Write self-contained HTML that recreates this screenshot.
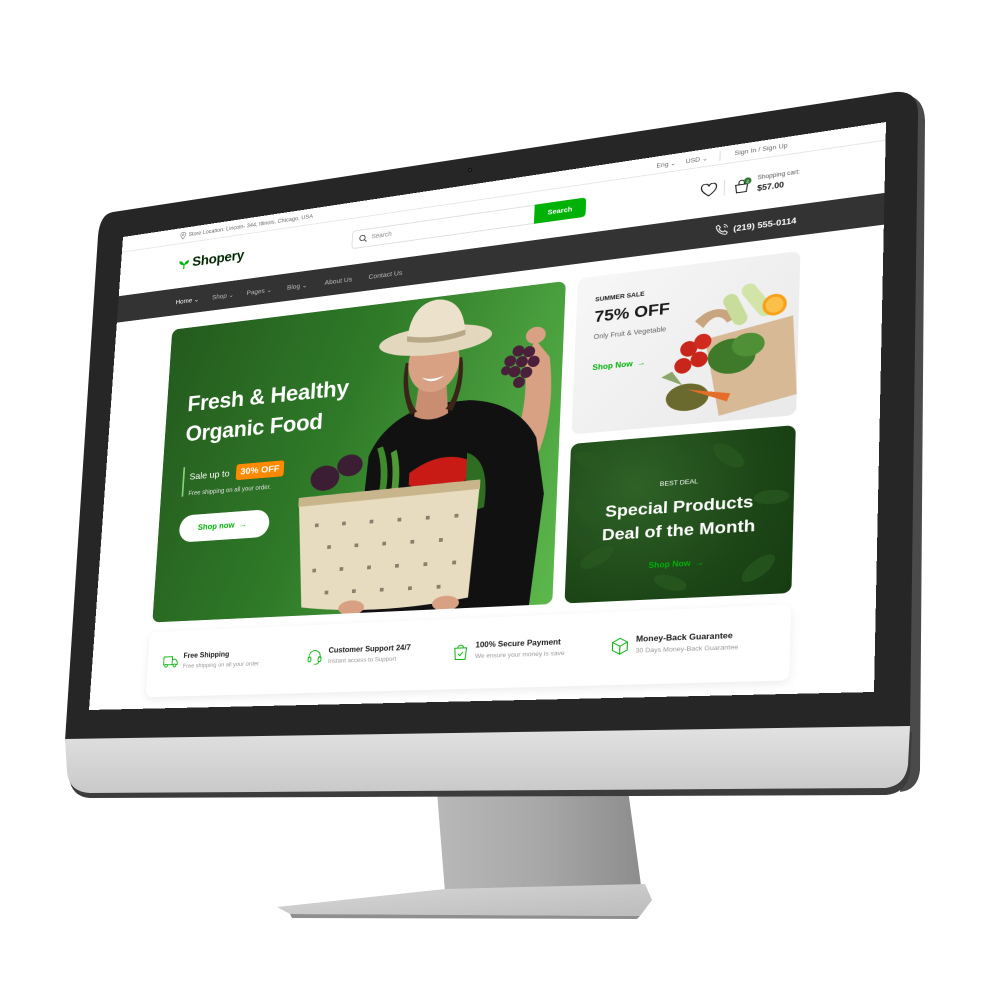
<!DOCTYPE html>
<html><head><meta charset="utf-8"><style>
*{margin:0;padding:0;box-sizing:border-box}
body{width:1000px;height:1000px;background:#fff;position:relative;overflow:hidden;font-family:"Liberation Sans",sans-serif}
#bez{position:absolute;left:0;top:0}
#screen{position:absolute;left:0;top:0;width:800px;height:560px;background:#fff;transform-origin:0 0;
transform:matrix3d(0.764213,-0.169849,0,-0.000213925,-0.065584,0.805793,0,-0.0000547179,0,0,1,0,123,237,0,1);overflow:hidden}
.abs{position:absolute}
.top{left:0;top:0;width:800px;height:19px;border-bottom:1px solid #e6e6e6;font-size:6.5px;color:#666}
.nav{left:0;top:72px;width:800px;height:32px;background:#333}
.nav span{position:absolute;top:12px;font-size:7.5px;color:#bbb}
.hero{left:70px;top:121px;width:435px;height:341px;border-radius:8px;overflow:hidden;background:linear-gradient(110deg,#245a1e 0%,#2f7a28 45%,#5cb84c 100%)}
.c1{left:517px;top:120px;width:210px;height:166px;border-radius:8px;background:linear-gradient(135deg,#f7f7f7,#e9e9e9);overflow:hidden}
.c2{left:517px;top:296px;width:210px;height:166px;border-radius:8px;overflow:hidden;background:radial-gradient(circle at 30% 30%,#2f6227 0,#1d4717 60%,#163b12 100%)}
.feat{left:68px;top:473px;width:659px;height:74px;border-radius:8px;background:#fff;box-shadow:0 3px 10px rgba(0,0,0,.08)}
.fi{position:absolute;top:24px}
.fi b{display:block;font-size:8px;color:#1a1a1a;margin-left:24px}
.fi i{display:block;font-style:normal;font-size:6.5px;color:#999;margin-left:24px;margin-top:4px}
.fi svg{position:absolute;left:0;top:2px}
</style></head><body>
<svg id="bez" width="1000" height="1000" viewBox="0 0 1000 1000">
<defs>
<linearGradient id="chin" x1="0" y1="0" x2="0" y2="1"><stop offset="0" stop-color="#e2e2e2"/><stop offset="1" stop-color="#c9c9c9"/></linearGradient>
<linearGradient id="neck" x1="0" y1="0" x2="1" y2="0"><stop offset="0" stop-color="#b8b8b8"/><stop offset=".5" stop-color="#a8a8a8"/><stop offset="1" stop-color="#8d8d8d"/></linearGradient>
<linearGradient id="foot" x1="0" y1="0" x2="1" y2="1"><stop offset="0" stop-color="#d8d8d8"/><stop offset="1" stop-color="#bcbcbc"/></linearGradient>
</defs>
<path d="M437,792 L628,790 L641,885 L445,892 Z" fill="url(#neck)"/>
<path d="M277,907 L445,889 L645,884 L652,900 L640,916 L290,914 Z" fill="url(#foot)"/>
<path d="M290,914 L640,916 L637,919 L292,918 Z" fill="#8f8f8f"/>
<path d="M905,95 Q924,97 925,120 L920,770 Q918,790 900,792 L905,760 Z" fill="#4a4a4a"/>
<path d="M70,745 L912,732 L910,772 Q907,793 886,795 L90,798 Q72,797 69,778 Z" fill="#3c3c3c"/>
<path d="M113,212 L895,92 Q918,90 918,113 L910,728 L65,741 L98,236 Q100,214 113,212 Z" fill="#262626"/>
<path d="M65,739 L910,726 L908,765 Q905,786 885,788 L90,793 Q69,792 67,772 Z" fill="url(#chin)"/>
<circle cx="470" cy="170" r="2.2" fill="#111"/><circle cx="470" cy="170" r="1" fill="#33435a"/>
</svg>

<div id="screen">
 <div class="abs top">
  <svg class="abs" style="left:72px;top:5px" width="7" height="9" viewBox="0 0 7 9"><path d="M3.5 8.5C1.5 6 .5 4.5.5 3.3a3 3 0 016 0c0 1.2-1 2.7-3 5.2z" fill="none" stroke="#777" stroke-width=".7"/><circle cx="3.5" cy="3.3" r="1" fill="none" stroke="#777" stroke-width=".6"/></svg>
  <span class="abs" style="left:82px;top:6px">Store Location: Lincoln- 344, Illinois, Chicago, USA</span>
  <span class="abs" style="left:590px;top:6px">Eng ⌄</span>
  <span class="abs" style="left:618px;top:6px">USD ⌄</span>
  <span class="abs" style="left:650px;top:4px;width:1px;height:11px;background:#ddd"></span>
  <span class="abs" style="left:664px;top:6px">Sign In / Sign Up</span>
 </div>
 <svg class="abs" style="left:72px;top:37px" width="14" height="14" viewBox="0 0 14 14"><path d="M7 13V7" stroke="#00b207" stroke-width="1.4"/><path d="M7 8C3 8 1 6 1 3c3 0 5.5 1.5 6 5z" fill="#00b207"/><path d="M7 8c4 0 6-2 6-5-3 0-5.5 1.5-6 5z" fill="#00b207"/></svg>
 <span class="abs" style="left:89px;top:35px;font-size:16px;font-weight:bold;color:#002603;letter-spacing:-.3px">Shopery</span>
 <div class="abs" style="left:275px;top:33px;width:200px;height:21px;border:1px solid #ddd;border-right:none;border-radius:4px 0 0 4px"></div>
 <svg class="abs" style="left:283px;top:39px" width="9" height="9" viewBox="0 0 9 9"><circle cx="3.8" cy="3.8" r="3" fill="none" stroke="#333" stroke-width=".9"/><path d="M6 6l2.5 2.5" stroke="#333" stroke-width=".9"/></svg>
 <span class="abs" style="left:297px;top:40px;font-size:7px;color:#888">Search</span>
 <div class="abs" style="left:470px;top:33px;width:52px;height:21px;background:#00b207;border-radius:0 4px 4px 0;color:#fff;font-size:7.5px;font-weight:bold;text-align:center;line-height:21px">Search</div>
 <svg class="abs" style="left:633px;top:37px" width="16" height="14" viewBox="0 0 16 14"><path d="M8 13S1 8.5 1 4.5A3.5 3.5 0 018 3a3.5 3.5 0 017 1.5C15 8.5 8 13 8 13z" fill="none" stroke="#1a1a1a" stroke-width="1.1"/></svg>
 <span class="abs" style="left:655px;top:36px;width:1px;height:16px;background:#ddd"></span>
 <svg class="abs" style="left:664px;top:35px" width="18" height="18" viewBox="0 0 18 18"><path d="M2 8h11l-1 8H3z" fill="none" stroke="#1a1a1a" stroke-width="1"/><path d="M5 8V6a2.5 2.5 0 015 0v2" fill="none" stroke="#1a1a1a" stroke-width="1"/><circle cx="13" cy="5" r="3.5" fill="#2c742f"/><text x="13" y="7" font-size="5" fill="#fff" text-anchor="middle" font-family="Liberation Sans">2</text></svg>
 <span class="abs" style="left:686px;top:36px;font-size:6px;color:#555">Shopping cart:</span>
 <span class="abs" style="left:686px;top:45px;font-size:8px;color:#1a1a1a;font-weight:bold">$57.00</span>
 <div class="abs nav">
  <span style="left:72px;color:#fff">Home ⌄</span>
  <span style="left:116px">Shop ⌄</span>
  <span style="left:157px">Pages ⌄</span>
  <span style="left:204px">Blog ⌄</span>
  <span style="left:247px">About Us</span>
  <span style="left:296px">Contact Us</span>
  <svg class="abs" style="left:648px;top:9px" width="13" height="13" viewBox="0 0 13 13"><path d="M3 1.5l2 2.5-1.2 1.3a7 7 0 003.9 3.9L9 8l2.5 2-1 1.8C6 12 1 7 1.2 2.5z" fill="none" stroke="#fff" stroke-width=".9"/><path d="M8 1.5a3.5 3.5 0 013.5 3.5M8 3.5A1.5 1.5 0 019.5 5" fill="none" stroke="#fff" stroke-width=".8"/></svg>
  <span style="left:665px;top:11px;color:#fff;font-size:8.5px;font-weight:bold">(219) 555-0114</span>
 </div>
 <div class="abs hero">
  <svg class="abs" style="left:12px;top:0" width="435" height="341" viewBox="0 0 435 341">
   <path d="M395,200 Q420,150 410,80 L395,60 L385,80 Q392,140 372,180 Z" fill="#d9a184"/>
   <ellipse cx="395" cy="55" rx="10" ry="9" fill="#d9a184"/>
   <g fill="#4a1f3a">
    <circle cx="378" cy="70" r="6"/><circle cx="389" cy="72" r="6"/><circle cx="370" cy="80" r="6"/><circle cx="382" cy="82" r="6"/><circle cx="394" cy="83" r="6"/><circle cx="375" cy="92" r="6"/><circle cx="387" cy="94" r="6"/><circle cx="380" cy="104" r="6"/><circle cx="366" cy="90" r="5"/>
   </g>
   <path d="M225,170 Q240,130 290,118 L330,118 Q380,125 400,165 L410,225 L400,341 L215,341 Z" fill="#111"/>
   <path d="M275,100 L305,100 L308,130 Q290,140 272,130 Z" fill="#c98e71"/>
   <ellipse cx="290" cy="72" rx="27" ry="33" fill="#d9a184"/>
   <path d="M263,70 Q262,110 275,125 L268,128 Q255,100 260,70Z" fill="#3a2418"/>
   <path d="M317,70 Q318,110 305,125 L312,128 Q325,100 320,70Z" fill="#3a2418"/>
   <path d="M278,88 Q290,98 302,88 Q290,93 278,88Z" fill="#fff"/>
   <ellipse cx="290" cy="48" rx="60" ry="16" fill="#e3d7bd"/>
   <path d="M260,46 Q262,5 290,3 Q320,5 322,46 Z" fill="#ece2cb"/>
   <path d="M260,40 Q290,48 322,40 L322,46 Q290,54 260,46Z" fill="#b7a988"/>
   <ellipse cx="178" cy="190" rx="16" ry="14" fill="#3b1e33"/>
   <ellipse cx="205" cy="178" rx="14" ry="12" fill="#3b1e33"/>
   <path d="M240,160 Q250,185 245,215 L238,215 Q242,185 234,162Z" fill="#3f8a2c"/>
   <path d="M255,165 Q262,190 258,215 L251,215 Q254,190 249,168Z" fill="#4e9a34"/>
   <path d="M270,192 Q300,170 330,182 Q340,200 320,212 Q290,215 270,205Z" fill="#c81b16"/>
   <path d="M330,175 Q355,185 350,235 L330,240Z" fill="#2f6e22"/>
   <path d="M150,210 L345,205 L338,330 Q245,345 160,332 Z" fill="#e8dcc0"/>
   <path d="M150,210 L345,205 L345,215 L150,220Z" fill="#c8b58c"/>
   <g fill="#3d3428" opacity=".55">
    <rect x="170" y="240" width="4" height="4"/><rect x="200" y="240" width="4" height="4"/><rect x="230" y="240" width="4" height="4"/><rect x="260" y="240" width="4" height="4"/><rect x="290" y="240" width="4" height="4"/><rect x="320" y="240" width="4" height="4"/>
    <rect x="185" y="265" width="4" height="4"/><rect x="215" y="265" width="4" height="4"/><rect x="245" y="265" width="4" height="4"/><rect x="275" y="265" width="4" height="4"/><rect x="305" y="265" width="4" height="4"/>
    <rect x="170" y="290" width="4" height="4"/><rect x="200" y="290" width="4" height="4"/><rect x="230" y="290" width="4" height="4"/><rect x="260" y="290" width="4" height="4"/><rect x="290" y="290" width="4" height="4"/><rect x="320" y="290" width="4" height="4"/>
    <rect x="185" y="315" width="4" height="4"/><rect x="215" y="315" width="4" height="4"/><rect x="245" y="315" width="4" height="4"/><rect x="275" y="315" width="4" height="4"/><rect x="305" y="315" width="4" height="4"/>
   </g>
   <ellipse cx="215" cy="335" rx="14" ry="8" fill="#d9a184"/>
   <ellipse cx="315" cy="335" rx="14" ry="8" fill="#d9a184"/>
  </svg>
  <div class="abs" style="left:25px;top:74px;color:#fff;font-size:25px;font-weight:bold;line-height:35px;letter-spacing:-.3px">Fresh &amp; Healthy<br>Organic Food</div>
  <div class="abs" style="left:25px;top:164px;width:1.5px;height:34px;background:#84d17a"></div>
  <span class="abs" style="left:33px;top:170px;color:#fff;font-size:10.5px">Sale up to</span>
  <span class="abs" style="left:88px;top:166px;background:#ff8a00;color:#fff;font-size:10.5px;font-weight:bold;padding:3px 5px;border-radius:3px">30% OFF</span>
  <span class="abs" style="left:33px;top:192px;color:#e0e0e0;font-size:7px">Free shipping on all your order.</span>
  <div class="abs" style="left:25px;top:220px;width:105px;height:31px;background:#fff;border-radius:16px;color:#00b207;font-size:9px;font-weight:bold;line-height:31px;padding-left:22px">Shop now &nbsp;→</div>
 </div>
 <div class="abs c1">
  <svg class="abs" style="left:85px;top:20px" width="125" height="146" viewBox="0 0 125 146">
   <path d="M30,40 Q50,20 70,40 L60,45 Q50,30 38,48Z" fill="#c8a57f"/>
   <path d="M40,60 L120,45 L125,125 L55,140 Z" fill="#d7b996"/>
   <rect x="60" y="15" width="14" height="35" rx="7" fill="#c8dc9b" transform="rotate(-25 67 32)"/>
   <rect x="80" y="5" width="14" height="40" rx="7" fill="#d3e4a8" transform="rotate(-35 87 25)"/>
   <circle cx="103" cy="32" r="11" fill="#f7a21b"/><circle cx="103" cy="32" r="8" fill="#fbc04a"/>
   <circle cx="25" cy="68" r="8" fill="#c8261b"/><circle cx="38" cy="62" r="8" fill="#d02b1f"/><circle cx="20" cy="85" r="8" fill="#c8261b"/><circle cx="35" cy="80" r="8" fill="#c8261b"/>
   <ellipse cx="65" cy="80" rx="22" ry="18" fill="#3f7a2a"/><ellipse cx="80" cy="70" rx="15" ry="12" fill="#4f8f35"/>
   <ellipse cx="25" cy="118" rx="20" ry="14" fill="#6b6a2e"/>
   <path d="M0,95 L20,105 L10,90Z" fill="#8aa66a"/>
   <path d="M25,110 L65,118 L62,126 Z" fill="#e56d2a"/>
  </svg>
  <span class="abs" style="left:18px;top:22px;font-size:6.5px;font-weight:bold;color:#1a1a1a">SUMMER SALE</span>
  <span class="abs" style="left:18px;top:34px;font-size:17px;font-weight:bold;color:#1a1a1a">75% OFF</span>
  <span class="abs" style="left:18px;top:62px;font-size:7px;color:#666">Only Fruit &amp; Vegetable</span>
  <span class="abs" style="left:18px;top:93px;font-size:8px;font-weight:bold;color:#00b207">Shop Now &nbsp;→</span>
 </div>
 <div class="abs c2">
  <svg class="abs" style="left:0;top:0" width="210" height="166"><g fill="#2a5a22" opacity=".7">
   <ellipse cx="20" cy="20" rx="18" ry="8" transform="rotate(30 20 20)"/><ellipse cx="70" cy="15" rx="16" ry="7" transform="rotate(-20 70 15)"/><ellipse cx="150" cy="25" rx="18" ry="8" transform="rotate(40 150 25)"/><ellipse cx="190" cy="70" rx="16" ry="7"/><ellipse cx="30" cy="120" rx="18" ry="8" transform="rotate(-30 30 120)"/><ellipse cx="100" cy="150" rx="16" ry="7" transform="rotate(20 100 150)"/><ellipse cx="180" cy="140" rx="18" ry="8" transform="rotate(-40 180 140)"/><ellipse cx="15" cy="70" rx="14" ry="6" transform="rotate(60 15 70)"/></g></svg>
  <div class="abs" style="left:0;top:46px;width:210px;text-align:center;color:#fff;font-size:6.5px">BEST DEAL</div>
  <div class="abs" style="left:0;top:62px;width:210px;text-align:center;color:#fff;font-size:17px;font-weight:bold;line-height:24px">Special Products<br>Deal of the Month</div>
  <div class="abs" style="left:0;top:127px;width:210px;text-align:center;color:#00b207;font-size:8px;font-weight:bold">Shop Now &nbsp;→</div>
 </div>
 <div class="abs feat">
  <div class="fi" style="left:18px"><svg width="18" height="16" viewBox="0 0 18 16"><path d="M1 3h10v9H1zM11 6h4l2 3v3h-6" fill="none" stroke="#00b207" stroke-width="1"/><circle cx="4" cy="13" r="1.6" fill="#fff" stroke="#00b207"/><circle cx="14" cy="13" r="1.6" fill="#fff" stroke="#00b207"/></svg><b>Free Shipping</b><i>Free shipping on all your order</i></div>
  <div class="fi" style="left:183px"><svg width="18" height="18" viewBox="0 0 18 18"><path d="M3 10V8a6 6 0 0112 0v2" fill="none" stroke="#00b207"/><rect x="2" y="9" width="3" height="5" rx="1" fill="none" stroke="#00b207"/><rect x="13" y="9" width="3" height="5" rx="1" fill="none" stroke="#00b207"/><path d="M14 14q0 3-5 3" fill="none" stroke="#00b207"/></svg><b>Customer Support 24/7</b><i>Instant access to Support</i></div>
  <div class="fi" style="left:338px"><svg width="18" height="18" viewBox="0 0 18 18"><path d="M3 5h12l-1 12H4z" fill="none" stroke="#00b207"/><path d="M6 5a3 3 0 016 0" fill="none" stroke="#00b207"/><path d="M6.5 11l2 2 3-4" fill="none" stroke="#00b207"/></svg><b>100% Secure Payment</b><i>We ensure your money is save</i></div>
  <div class="fi" style="left:495px"><svg width="18" height="18" viewBox="0 0 18 18"><path d="M9 1l7 4v8l-7 4-7-4V5zM2 5l7 4 7-4M9 9v8" fill="none" stroke="#00b207"/></svg><b>Money-Back Guarantee</b><i>30 Days Money-Back Guarantee</i></div>
 </div>
</div>
</body></html>
